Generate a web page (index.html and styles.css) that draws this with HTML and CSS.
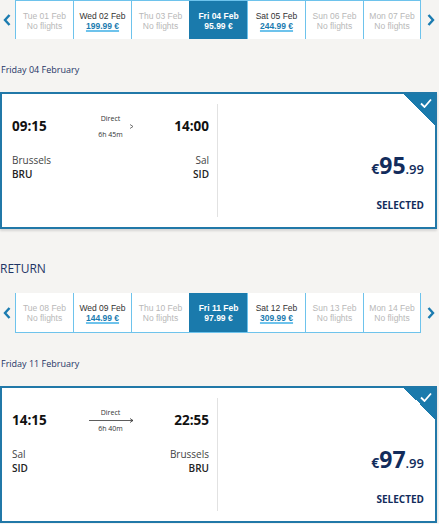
FILE: index.html
```html
<!DOCTYPE html>
<html lang="en">
<head>
    <meta charset="UTF-8">
    <meta name="viewport" content="width=device-width, initial-scale=1.0">
    <title>Flights</title>
    <link rel="stylesheet" href="styles.css">
</head>
<body>
    <div class="dates dates-top">
        <span class="nav"><svg width="8" height="12" viewBox="0 0 8 12"><path d="M6.5 1 L2 6 L6.5 11" fill="none" stroke="#1b7bb0" stroke-width="2.4"/></svg></span>
        <div class="cells">
            <div class="cell off"><span>Tue 01 Feb</span><span>No flights</span></div>
            <div class="cell"><span>Wed 02 Feb</span><a class="price">199.99 &euro;</a></div>
            <div class="cell off"><span>Thu 03 Feb</span><span>No flights</span></div>
            <div class="cell active"><span>Fri 04 Feb</span><span>95.99 &euro;</span></div>
            <div class="cell"><span>Sat 05 Feb</span><a class="price">244.99 &euro;</a></div>
            <div class="cell off"><span>Sun 06 Feb</span><span>No flights</span></div>
            <div class="cell off"><span>Mon 07 Feb</span><span>No flights</span></div>
        </div>
        <span class="nav"><svg width="8" height="12" viewBox="0 0 8 12"><path d="M1.5 1 L6 6 L1.5 11" fill="none" stroke="#1b7bb0" stroke-width="2.4"/></svg></span>
    </div>

    <div class="day-title">Friday 04 February</div>

    <div class="card">
        <div class="trip">
            <div class="times">
                <span class="time">09:15</span>
                <div class="middle">
                    <span class="small">Direct</span>
                    <svg class="arrow" width="46" height="7" viewBox="0 0 46 7"><path d="M42 1.5 L45 3.5 L42 5.5" fill="none" stroke="#555" stroke-width="0.8"/></svg>
                    <span class="small">6h 45m</span>
                </div>
                <span class="time">14:00</span>
            </div>
            <div class="places">
                <div>
                    <div class="city">Brussels</div>
                    <div class="code">BRU</div>
                </div>
                <div class="right">
                    <div class="city">Sal</div>
                    <div class="code">SID</div>
                </div>
            </div>
        </div>
        <div class="fare">
            <div class="amount"><span class="cur">&euro;</span><span class="big">95</span><span class="cents">.99</span></div>
            <div class="selected">SELECTED</div>
        </div>
        <div class="corner">
            <svg width="12" height="10" viewBox="0 0 12 10"><path d="M1 5.5 L4.5 9 L11 1.5" fill="none" stroke="#fff" stroke-width="1.8"/></svg>
        </div>
    </div>

    <h2 class="section">RETURN</h2>

    <div class="dates dates-bottom">
        <span class="nav"><svg width="8" height="12" viewBox="0 0 8 12"><path d="M6.5 1 L2 6 L6.5 11" fill="none" stroke="#1b7bb0" stroke-width="2.4"/></svg></span>
        <div class="cells">
            <div class="cell off"><span>Tue 08 Feb</span><span>No flights</span></div>
            <div class="cell"><span>Wed 09 Feb</span><a class="price">144.99 &euro;</a></div>
            <div class="cell off"><span>Thu 10 Feb</span><span>No flights</span></div>
            <div class="cell active"><span>Fri 11 Feb</span><span>97.99 &euro;</span></div>
            <div class="cell"><span>Sat 12 Feb</span><a class="price">309.99 &euro;</a></div>
            <div class="cell off"><span>Sun 13 Feb</span><span>No flights</span></div>
            <div class="cell off"><span>Mon 14 Feb</span><span>No flights</span></div>
        </div>
        <span class="nav"><svg width="8" height="12" viewBox="0 0 8 12"><path d="M1.5 1 L6 6 L1.5 11" fill="none" stroke="#1b7bb0" stroke-width="2.4"/></svg></span>
    </div>

    <div class="day-title">Friday 11 February</div>

    <div class="card">
        <div class="trip">
            <div class="times">
                <span class="time">14:15</span>
                <div class="middle">
                    <span class="small">Direct</span>
                    <svg class="arrow" width="46" height="7" viewBox="0 0 46 7"><path d="M1 3.5 H45 M42 1.5 L45 3.5 L42 5.5" fill="none" stroke="#333" stroke-width="0.8"/></svg>
                    <span class="small">6h 40m</span>
                </div>
                <span class="time">22:55</span>
            </div>
            <div class="places">
                <div>
                    <div class="city">Sal</div>
                    <div class="code">SID</div>
                </div>
                <div class="right">
                    <div class="city">Brussels</div>
                    <div class="code">BRU</div>
                </div>
            </div>
        </div>
        <div class="fare">
            <div class="amount"><span class="cur">&euro;</span><span class="big">97</span><span class="cents">.99</span></div>
            <div class="selected">SELECTED</div>
        </div>
        <div class="corner">
            <svg width="12" height="10" viewBox="0 0 12 10"><path d="M1 5.5 L4.5 9 L11 1.5" fill="none" stroke="#fff" stroke-width="1.8"/></svg>
        </div>
    </div>
</body>
</html>
```

FILE: styles.css
```css
body {
    margin: 0;
    padding: 0;
    background-color: #f5f4f2;
    font-family: "Open Sans", "Noto Sans", Arial, sans-serif;
    color: #222;
    width: 439px;
}
.dates {
    display: flex;
    align-items: center;
}
.nav {
    width: 15px;
    display: flex;
    justify-content: center;
    padding-right: 2px;
    box-sizing: border-box;
}
.nav:last-child {
    width: 17px;
    padding: 0 0 0 2px;
}
.cells {
    display: flex;
    background-color: #fff;
}
.dates-top .cells {
    border-top: 1px solid #6ec3ec;
}
.dates-bottom .cells {
    border-bottom: 1px solid #6ec3ec;
}
.cell {
    width: 58px;
    height: 39px;
    box-sizing: border-box;
    border-left: 1px solid #6ec3ec;
    display: flex;
    flex-direction: column;
    align-items: center;
    justify-content: center;
    font-family: "Liberation Sans", Arial, sans-serif;
    font-size: 8.5px;
    line-height: 10px;
    color: #333;
    padding-top: 1px;
}
.dates-top .cell {
    height: 38px;
}
.cell:last-child {
    border-right: 1px solid #6ec3ec;
}
.cell.off {
    color: #b8b8b8;
}
.cell.active {
    background-color: #1a7aac;
    border-color: #1a7aac;
    color: #fff;
    font-weight: bold;
}
.cell .price {
    color: #1b7bb0;
    font-weight: bold;
    text-decoration: underline;
    text-decoration-color: #6ec3ec;
    text-decoration-thickness: 2px;
    text-underline-offset: 1px;
}
.day-title {
    font-size: 9px;
    line-height: 14px;
    color: #1f3566;
    padding: 24px 1px 15px;
}
.card {
    position: relative;
    display: flex;
    width: 437px;
    height: 137px;
    box-sizing: border-box;
    background-color: #fff;
    border: 2px solid #2178a8;
    box-shadow: 0 2px 2px rgba(0, 0, 0, 0.12);
    overflow: hidden;
}
.trip {
    width: 215px;
    padding: 15px 8px 0 10px;
    box-sizing: border-box;
}
.times {
    display: flex;
    justify-content: space-between;
    align-items: center;
    height: 34px;
}
.time {
    font-size: 13.5px;
    font-weight: bold;
    color: #111;
}
.middle {
    display: flex;
    flex-direction: column;
    align-items: center;
    width: 60px;
}
.small {
    font-size: 7px;
    line-height: 9px;
    color: #333;
}
.arrow {
    margin: 0;
}
.places {
    display: flex;
    justify-content: space-between;
    margin-top: 10px;
    font-size: 10px;
    line-height: 14px;
}
.right {
    text-align: right;
}
.city {
    color: #444;
}
.code {
    color: #222;
    font-weight: 600;
}
.fare {
    flex: 1;
    margin: 10px 0;
    border-left: 1px solid #e2e2e2;
    display: flex;
    flex-direction: column;
    align-items: flex-end;
    padding: 46px 11px 0 0;
}
.amount {
    color: #122c5c;
    font-weight: bold;
    line-height: 30px;
}
.cur {
    font-size: 14px;
}
.big {
    font-size: 23px;
}
.cents {
    font-size: 13px;
    font-weight: 600;
}
.selected {
    margin-top: 14px;
    font-size: 10px;
    font-weight: bold;
    color: #122c5c;
}
.section {
    margin: 0;
    padding: 32px 0 16px;
    font-size: 12px;
    line-height: 16px;
    font-weight: normal;
    color: #1f3566;
}
.corner {
    position: absolute;
    top: 0;
    right: 0;
    width: 31px;
    height: 31px;
    background: linear-gradient(to bottom left, #1a7aac 50%, transparent 50%);
}
.corner svg {
    position: absolute;
    top: 4px;
    right: 3px;
}
```
